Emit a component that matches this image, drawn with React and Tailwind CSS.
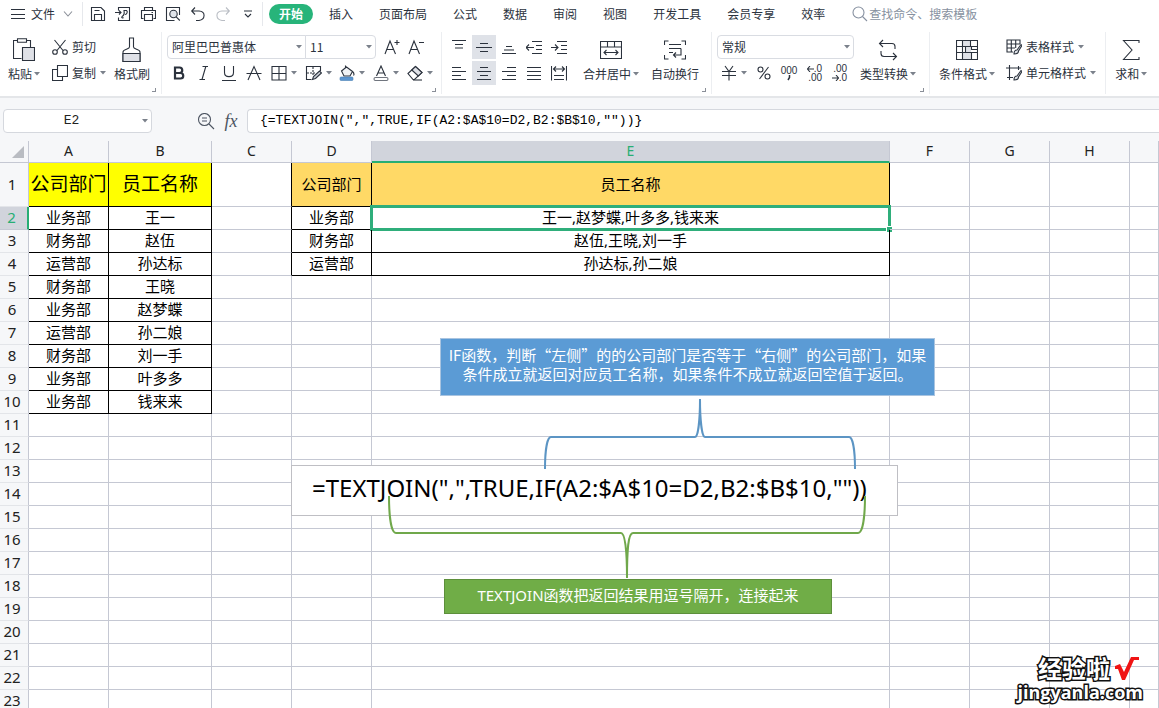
import { useState } from "react";

const UI_FONT = "font-['Noto_Sans_CJK_SC','Open_Sans',sans-serif]";
const SHEET_FONT = "font-['Noto_Sans','Noto_Sans_CJK_SC',sans-serif]";

const TABS = ["插入", "页面布局", "公式", "数据", "审阅", "视图", "开发工具", "会员专享", "效率"];

const COLUMNS = [
  { name: "A", width: "w-20" },
  { name: "B", width: "w-[103px]" },
  { name: "C", width: "w-20" },
  { name: "D", width: "w-20" },
  { name: "E", width: "w-[518px]" },
  { name: "F", width: "w-20" },
  { name: "G", width: "w-20" },
  { name: "H", width: "w-20" },
  { name: "", width: "" },
];

const STAFF = [
  ["公司部门", "员工名称"],
  ["业务部", "王一"],
  ["财务部", "赵伍"],
  ["运营部", "孙达标"],
  ["财务部", "王晓"],
  ["业务部", "赵梦蝶"],
  ["运营部", "孙二娘"],
  ["财务部", "刘一手"],
  ["业务部", "叶多多"],
  ["业务部", "钱来来"],
];

const RESULT = [
  ["公司部门", "员工名称"],
  ["业务部", "王一,赵梦蝶,叶多多,钱来来"],
  ["财务部", "赵伍,王晓,刘一手"],
  ["运营部", "孙达标,孙二娘"],
];

const ROWS = Array.from({ length: 23 }, (_, i) => i);

function cellText(row, col) {
  if (col < 2) return STAFF[row]?.[col];
  if (col === 3 || col === 4) return RESULT[row]?.[col - 3];
  return undefined;
}

function cellClass(row, col) {
  const inStaff = row < STAFF.length && col < 2;
  const inResult = row < RESULT.length && (col === 3 || col === 4);
  let cls = "relative whitespace-nowrap border-b border-r px-0 pb-0.5 pt-0 text-center text-black ";
  if (inStaff || inResult) cls += "border-black ";
  else if (col === 2 && row < RESULT.length) cls += "border-b-[#c5c8d3] border-r-black ";
  else cls += "border-[#c5c8d3] ";
  if (row === 0 && inStaff) cls += "bg-[#ffff00] text-[19px] ";
  else cls += "text-[15px] ";
  if (row === 0 && inResult) cls += "bg-[#ffd966] ";
  return cls;
}

function Svg({ w = 16, h = 16, children }) {
  return (
    <svg width={w} height={h} viewBox={`0 0 ${w} ${h}`} fill="none" stroke="currentColor" strokeWidth="1.1" className="shrink-0" aria-hidden="true">
      {children}
    </svg>
  );
}

function Caret() {
  return (
    <svg width="6" height="4" viewBox="0 0 6 4" className="shrink-0 fill-[#7b818b]" aria-hidden="true">
      <path d="M0 0h6L3 3.6z" />
    </svg>
  );
}

const icons = {
  menu: <Svg w={14}><path d="M0 3.5h14M0 8.5h14M0 12.5h14" /></Svg>,
  save: <Svg><path d="M1.5 14.5v-13h9.5l3.5 3.5v9.5zM4.5 14.5v-6h7v6M4.5 4.5h5" /></Svg>,
  pdf: <Svg><path d="M3.5 4.5v-3h11v13h-11v-3M0 6.5h6M4 4.5l2 2-2 2M8.5 11.5c-1.5 1-2.5 0-1-1.3 2-1.2 2-3 1.5-5.7h2.5c1.5 1 .5 4-1.500 4" /></Svg>,
  print: <Svg><path d="M4.500 4.500v-3h8v3M3.500 12.500h-2v-8h14v8h-2M4.500 8.500h8v6h-8zM11.500 6.500h1.500" /></Svg>,
  preview: <Svg><path d="M14.500 9V1.500h-13v13h8" /><circle cx="8.500" cy="8" r="3.700" fill="#dfe3e9" /><path d="M11.200 10.800l3.600 3.700" /></Svg>,
  undo: <Svg><path d="M5 1.500L1.700 5 5 8.500M2 5h7c7 .5 6.500 8.500 0 9.500H6" /></Svg>,
  redo: <Svg><path d="M11 1.500L14.300 5 11 8.500M14 5H7c-7 .5-6.500 8.500 0 9.500h3" /></Svg>,
  more: <Svg w={8} h={8}><path d="M0 1h8M1 4l3 3 3-3" /></Svg>,
  down: <Svg w={10} h={6}><path d="M1 .5l4 4.500 4-4.500" /></Svg>,
  search: <Svg><circle cx="6.500" cy="6.500" r="5.500" /><path d="M10.500 10.500l4.500 4.500" /></Svg>,
  paste: (
    <Svg w={22} h={24}>
      <path d="M8.500 20.500h-8v-18h4M13.500 2.500h4v7" />
      <path d="M4.500.8h9v3.400h-9z" />
      <path d="M9.500 9.500h12v13h-12z" fill="#dfe1e7" />
    </Svg>
  ),
  cut: <Svg><path d="M2.500 1l8.500 10.500M13.500 1L5 11.500" /><circle cx="3" cy="13" r="2.300" /><circle cx="13" cy="13" r="2.300" /></Svg>,
  copy: <Svg><path d="M5.500.5h10v11h-10zM5 4.500H.5v11h10v-4" /></Svg>,
  brush: (
    <Svg w={20} h={26}>
      <path d="M7.500 10V1h4v9c0 2.500 6.500 2 6.500 5v9.500H1V15c0-3 6.500-2.500 6.500-5z" />
      <path d="M1 16.500h17v8H1z" fill="#dfe1e7" />
    </Svg>
  ),
  grow: <Svg w={18}><path d="M2 15L7 2l5.500 13M4 10.500h6.500M11.500 3.500h5M14 1v5" /></Svg>,
  shrink: <Svg w={18}><path d="M2 15L7 2l5.500 13M4 10.500h6.500M12 3.500h5" /></Svg>,
  bold: <Svg w={14}><path d="M3 2.500h4.500a2.700 2.700 0 010 5.500H3zM3 8h5.500a2.700 2.700 0 010 5.500H3z" strokeWidth="2.200" /></Svg>,
  italic: <Svg w={12}><path d="M4.500 1.500H10M1.500 14.500H7M7.800 1.500L4 14.500" /></Svg>,
  underline: <Svg><path d="M3.500 1v6.500c0 5.500 9 5.500 9 0V1M1 15.500h14" /></Svg>,
  strike: <Svg><path d="M2 15L8 1.500 14 15M.5 8.500h15" /></Svg>,
  borders: <Svg><path d="M1 1.500h14v13.500H1zM8 1.500V15M1 8.500h14" /></Svg>,
  drawBorder: (
    <Svg w={17}>
      <path d="M15.500 6V1.500h-14v13h5" />
      <path d="M8 2v8M2 8h8" strokeDasharray="2 1" />
      <path d="M7.500 14.500l1-3 6-5.500 2 2-6 5.500z" fill="#c9ced6" />
    </Svg>
  ),
  fill: (
    <Svg>
      <path d="M6.500.5v3M2.500 6l5-4 6 4.500-2.500 4.500H5z" fill="#f1f3f6" />
      <path d="M13.500 6.500c1.500 1.500 1.800 3 1 4" />
      <rect x="1" y="12" width="13" height="3.500" rx="1" fill="#5b95d0" stroke="#4a7fb5" strokeWidth=".6" />
    </Svg>
  ),
  fontColor: <Svg><path d="M3.500 11L8 1l4.500 10M5 8h6" /><rect x="1" y="12.500" width="14" height="3" rx="1.500" stroke="#70757e" /></Svg>,
  eraser: <Svg><path d="M1 8.500L8.500 1.500l6.500 6-7.500 7H6z" /><path d="M4.800 5l6.500 6L15 7.500l-6.500-6z" fill="#dfe1e7" /><path d="M6 15h9" /></Svg>,
  top: <Svg><path d="M1 1.500h14M4 5.500h8M4 9h8" /></Svg>,
  middle: <Svg><path d="M4 4.500h8M0 8.500h16M4 12.500h8" /></Svg>,
  bottom: <Svg><path d="M5 7.500h6M3 11h10M1 14.500h14" /></Svg>,
  outdent: <Svg><path d="M6 2.500h10M10 6.500h6M10 10.500h6M6 14.500h10M0 8.500h8M3 5.500l-3 3 3 3" /></Svg>,
  indent: <Svg><path d="M6 2.500h10M10 6.500h6M10 10.500h6M6 14.500h10M0 8.500h7M4 5.500l3 3-3 3" /></Svg>,
  left: <Svg><path d="M1 2.500h9M1 6.500h14M1 10.500h9M1 14.500h14" /></Svg>,
  center: <Svg><path d="M4 2.500h8M1 6.500h14M4 10.500h8M1 14.500h14" /></Svg>,
  right: <Svg><path d="M6 2.500h9M1 6.500h14M6 10.500h9M1 14.500h14" /></Svg>,
  justify: <Svg><path d="M1 2.500h14M1 6.500h14M1 10.500h14M1 14.500h14" /></Svg>,
  distribute: <Svg><path d="M.5 1v14.500M15.500 1v14.500M2.500 4h11M5 1.500L2.500 4 5 6.500M11 1.500L13.500 4 11 6.500M3 10.500h10M3 14.500h10" /></Svg>,
  merge: <Svg w={22} h={20}><path d="M.5 1.500h21v17H.5zM.5 7h21M7.500 1.500V7M14.500 1.500V7M4 12.500h14M6.500 10L4 12.500 6.500 15M15.500 10l2.500 2.500-2.500 2.500" /></Svg>,
  wrap: <Svg w={22} h={20}><path d="M4.500 1H.5v4M17.500 1h4v4M4.500 19H.5v-4M17.500 19h4v-4M5 4.500h12M5 8.500h12M5 12.500h4M17 8.500v6.500H9M12 12.500L9.500 15l2.500 2.500" /></Svg>,
  yuan: <Svg><path d="M4 1l4 5.500L12 1M1 6.500h14M1 10.500h14M8 6.500V15.500" /></Svg>,
  percent: <Svg w={14}><circle cx="3.500" cy="4.500" r="2.500" /><circle cx="10.500" cy="11.500" r="2.500" /><path d="M11.500 2L2.500 14" /></Svg>,
  convert: <Svg w={20} h={22}><path d="M5 1L1.500 4.500 5 8M2 4.500h12c2 0 3 1 3 3V10M15 14l3.500 3.500L15 21M18 17.500H6c-2 0-3-1-3-3V12" /></Svg>,
  condition: (
    <Svg w={22} h={20}>
      <path d="M6 1h8v6H6zM9 7h6v6H9zM6 13h9v6H6z" fill="#dfe1e7" stroke="none" />
      <path d="M.5.500h21v19H.5zM.5 6.500h21M.5 12.500h21M6.500.5v19M14.500.5v6M9.500 6.500v6M15.500 12.500v7M15.500 6.500v3h6" />
    </Svg>
  ),
  tableStyle: (
    <Svg>
      <path d="M14 5V1H1v12h6M1 5h13M1 9h8M5.300 1v12M9.700 1v8" />
      <path d="M8 15c0-3 1-4 3-4l4-5.500 1 1-3.500 5.500c0 2-1.500 3-4.500 3z" fill="#e3e6eb" />
    </Svg>
  ),
  cellStyle: (
    <Svg>
      <path d="M3.500 0v15M0 3h15M12.500 1v4M1 12.500h6" />
      <path d="M8 15c0-3 1-4 3-4l4-5.500 1 1-3.500 5.500c0 2-1.500 3-4.500 3z" fill="#e3e6eb" />
    </Svg>
  ),
  sum: <Svg w={18} h={20}><path d="M17 3V.5H1.500L10 10l-8.500 9.500H17V17" /></Svg>,
  zoom: <Svg w={18} h={18}><circle cx="7.500" cy="7.500" r="6" /><path d="M12 12l5 5M5 6h5M5 9h5" /></Svg>,
};

function IconButton({ icon, label, active, menu, disabled }) {
  const size = menu ? "w-[34px] gap-1" : "w-6";
  return (
    <button type="button" aria-label={label} disabled={disabled} className={`flex h-6 shrink-0 items-center justify-center ${size} ${active ? "bg-[#dfe2e8]" : ""} ${disabled ? "text-[#b9bdc4]" : ""}`}>
      {icons[icon]}
      {menu && <Caret />}
    </button>
  );
}

function BigButton({ icon, label, menu }) {
  return (
    <button type="button" className="flex shrink-0 flex-col items-center whitespace-nowrap">
      <span className="flex h-[30px] items-center">{icons[icon]}</span>
      <span className="flex h-[18px] items-center gap-0.5">
        {label}
        {menu && <Caret />}
      </span>
    </button>
  );
}

function RowButton({ icon, label, menu }) {
  return (
    <button type="button" className="flex h-6 items-center gap-1 whitespace-nowrap">
      {icons[icon]}
      <span>{label}</span>
      {menu && <Caret />}
    </button>
  );
}

function Group({ children, launcher, className = "" }) {
  return (
    <div className={`relative flex h-[62px] shrink-0 border-r border-[#eceef1] pt-[3px] ${className}`}>
      {children}
      {launcher && <i className="absolute bottom-[2px] right-[5px] h-1 w-1 border-b border-r border-[#8a8f98]" />}
    </div>
  );
}

function Picker({ label, options, className }) {
  return (
    <label className={`relative flex h-6 items-center border border-[#d9dce2] bg-white ${className}`}>
      <select aria-label={label} className="w-full appearance-none bg-transparent pl-1 outline-none">
        {options.map((o) => (
          <option key={o}>{o}</option>
        ))}
      </select>
      <span className="pointer-events-none absolute right-[3px]"><Caret /></span>
    </label>
  );
}

function TopBar() {
  return (
    <div className="flex h-7 shrink-0 items-center whitespace-nowrap">
      <button type="button" className="flex h-6 items-center gap-1.5 pl-[11px] pr-[9px]">
        {icons.menu}
        <span>文件</span>
        <span className="ml-0.5 text-[#8a8f98]">{icons.down}</span>
      </button>
      <div className="flex h-6 items-center gap-px border-x border-[#e6e8ec] pl-[3px] pr-0.5">
        <IconButton icon="save" label="保存" />
        <IconButton icon="pdf" label="输出为PDF" />
        <IconButton icon="print" label="打印" />
        <IconButton icon="preview" label="打印预览" />
        <IconButton icon="undo" label="撤销" />
        <IconButton icon="redo" label="恢复" disabled />
        <IconButton icon="more" label="更多" />
      </div>
      <button type="button" className="ml-1.5 mr-4 h-5 rounded-full bg-[#27b47a] px-2.5 font-bold text-white">开始</button>
      <nav className="flex gap-[26px]">
        {TABS.map((t) => (
          <button key={t} type="button">{t}</button>
        ))}
      </nav>
      <label className="ml-[27px] flex items-center gap-px text-[#8791a0]">
        {icons.search}
        <input aria-label="搜索" placeholder="查找命令、搜索模板" className="w-32 bg-transparent outline-none placeholder:text-[#8791a0]" />
      </label>
    </div>
  );
}

function Ribbon() {
  return (
    <div className="flex h-[70px] shrink-0 items-start overflow-hidden border-b-2 border-[#e4e6e9] pt-1">
      <Group launcher className="gap-3 pl-2 pr-[11px]">
        <BigButton icon="paste" label="粘贴" menu />
        <div className="flex flex-col gap-0.5">
          <RowButton icon="cut" label="剪切" />
          <RowButton icon="copy" label="复制" menu />
        </div>
        <div className="-ml-1 flex">
          <BigButton icon="brush" label="格式刷" />
        </div>
      </Group>

      <Group launcher className="flex-col gap-0.5 pl-[5px] pr-1">
        <div className="flex">
          <Picker label="字体" options={["阿里巴巴普惠体"]} className="w-[139px] rounded-l" />
          <Picker label="字号" options={["11", "12", "14"]} className="-ml-px mr-1 w-[71px] rounded-r" />
          <IconButton icon="grow" label="增大字号" />
          <IconButton icon="shrink" label="减小字号" />
        </div>
        <div className="flex">
          <div className="flex gap-px pr-px">
            <IconButton icon="bold" label="加粗" />
            <IconButton icon="italic" label="倾斜" />
            <IconButton icon="underline" label="下划线" />
            <IconButton icon="strike" label="删除线" />
          </div>
          <IconButton icon="borders" label="边框" menu />
          <IconButton icon="drawBorder" label="绘制边框" menu />
          <IconButton icon="fill" label="填充颜色" menu />
          <IconButton icon="fontColor" label="字体颜色" menu />
          <IconButton icon="eraser" label="清除" menu />
        </div>
      </Group>

      <Group launcher className="gap-3 pl-[5px] pr-3">
        <div className="flex flex-col gap-0.5">
          <div className="flex gap-px">
            <IconButton icon="top" label="顶端对齐" />
            <IconButton icon="middle" label="垂直居中" active />
            <IconButton icon="bottom" label="底端对齐" />
            <IconButton icon="outdent" label="减少缩进" />
            <IconButton icon="indent" label="增加缩进" />
          </div>
          <div className="flex gap-px">
            <IconButton icon="left" label="左对齐" />
            <IconButton icon="center" label="水平居中" active />
            <IconButton icon="right" label="右对齐" />
            <IconButton icon="justify" label="两端对齐" />
            <IconButton icon="distribute" label="分散对齐" />
          </div>
        </div>
        <BigButton icon="merge" label="合并居中" menu />
        <BigButton icon="wrap" label="自动换行" />
      </Group>

      <Group launcher className="gap-1.5 pl-[5px] pr-[13px]">
        <div className="flex flex-col gap-0.5">
          <Picker label="数字格式" options={["常规", "数值", "货币"]} className="w-[137px] rounded" />
          <div className="flex gap-px">
            <IconButton icon="yuan" label="货币" menu />
            <IconButton icon="percent" label="百分比" />
            <button type="button" aria-label="千位分隔" className="flex h-6 w-6 flex-col items-center justify-center font-['Liberation_Sans',sans-serif] text-[10px] leading-[9px]">
              <span>000</span>
              <Svg w={4} h={6}><path d="M2.500 0v2.500L1 5" strokeWidth="1.500" /></Svg>
            </button>
            <button type="button" aria-label="增加小数位" className="flex h-6 w-6 flex-col items-end justify-center pr-1 font-['Liberation_Sans',sans-serif] text-[10px] leading-[9px]">
              <span className="flex items-center"><Svg w={7} h={6}><path d="M0 3h7M3 0L.5 3 3 6" /></Svg>.0</span>
              <span>.00</span>
            </button>
            <button type="button" aria-label="减少小数位" className="flex h-6 w-6 flex-col items-end justify-center pr-1 font-['Liberation_Sans',sans-serif] text-[10px] leading-[9px]">
              <span>.00</span>
              <span className="flex items-center"><Svg w={7} h={6}><path d="M0 3h7M4 0l2.500 3L4 6" /></Svg>.0</span>
            </button>
          </div>
        </div>
        <BigButton icon="convert" label="类型转换" menu />
      </Group>

      <Group className="gap-[11px] px-[9px]">
        <BigButton icon="condition" label="条件格式" menu />
        <div className="flex flex-col gap-0.5">
          <RowButton icon="tableStyle" label="表格样式" menu />
          <RowButton icon="cellStyle" label="单元格样式" menu />
        </div>
      </Group>

      <Group className="border-r-0 pl-[9px]">
        <BigButton icon="sum" label="求和" menu />
      </Group>
    </div>
  );
}

function FormulaBar({ formula, onChange }) {
  return (
    <div className="flex h-[43px] shrink-0 items-center bg-[#f6f7f9] pl-[3px] pt-0.5">
      <label className="relative flex h-6 w-[149px] items-center rounded-sm border border-[#d5d8de] bg-white">
        <input aria-label="名称框" defaultValue="E2" className="w-full bg-transparent pr-3 text-center font-['Liberation_Mono',monospace] text-[13px] text-[#222] outline-none" />
        <span className="pointer-events-none absolute right-[3px]"><Caret /></span>
      </label>
      <button type="button" aria-label="查找" className="ml-[45px] text-[#4d5562]">{icons.zoom}</button>
      <button type="button" aria-label="插入函数" className="ml-2 mr-2 w-4 font-['Liberation_Serif',serif] text-lg italic text-[#4d5562]">fx</button>
      <input
        aria-label="编辑栏"
        value={formula}
        onChange={(e) => onChange(e.target.value)}
        className="h-6 min-w-0 flex-1 rounded-l-sm border border-r-0 border-[#d5d8de] bg-white pl-3 font-['Liberation_Mono',monospace] text-[13px] text-black outline-none"
      />
    </div>
  );
}

function Sheet() {
  return (
    <table className={`w-full table-fixed border-separate border-spacing-0 ${SHEET_FONT}`}>
      <colgroup>
        <col className="w-[29px]" />
        {COLUMNS.map((c) => (
          <col key={c.name} className={c.width} />
        ))}
      </colgroup>
      <thead>
        <tr className="h-[22px] text-[14px] leading-[18px]">
          <th className="border-b border-r border-[#c5c8d3] bg-[#f6f7f9] p-0">
            <svg width="12" height="12" viewBox="0 0 12 12" className="ml-auto mr-1 fill-[#b9bcc2]" aria-hidden="true">
              <path d="M12 0v12H0z" />
            </svg>
          </th>
          {COLUMNS.map((c) => (
            <th key={c.name} className={c.name === "E" ? "border-b-2 border-r border-b-[#27ae74] border-r-[#c5c8d3] bg-[#d1d4dc] p-0 font-normal text-[#27ae74]" : "border-b border-r border-[#c5c8d3] bg-[#f6f7f9] p-0 pb-px font-normal text-[#222]"}>
              {c.name}
            </th>
          ))}
        </tr>
      </thead>
      <tbody>
        {ROWS.map((r) => (
          <tr key={r} className={r === 0 ? "h-11 leading-5" : "h-[23px] leading-5"}>
            <th className={r === 1 ? "border-b border-r-2 border-b-[#c5c8d3] border-r-[#27ae74] bg-[#d1d4dc] p-0 pb-0.5 pr-1 text-[15px] font-normal text-[#27ae74]" : "border-b border-r border-b-[#e3e5e9] border-r-[#c5c8d3] bg-[#f6f7f9] p-0 pb-0.5 pr-1 text-[15px] font-normal text-[#222]"}>
              {r + 1}
            </th>
            {COLUMNS.map((c, i) => (
              <td key={c.name} className={cellClass(r, i)}>
                {cellText(r, i)}
                {r === 1 && c.name === "E" && (
                  <span className="pointer-events-none absolute -bottom-0.5 -left-0.5 -right-0.5 -top-0.5 border-3 border-[#2fae7b]">
                    <i className="absolute -bottom-1 -right-1 h-1.5 w-1.5 border-l border-t border-white bg-[#2fae7b]" />
                  </span>
                )}
              </td>
            ))}
          </tr>
        ))}
      </tbody>
    </table>
  );
}

// floating shapes placed on the sheet
function Drawings() {
  return (
    <div className={`pointer-events-none absolute inset-0 ${SHEET_FONT}`}>
      <div className="absolute left-[440px] top-[197px] h-[58px] w-[495px] whitespace-nowrap border border-[#a9c4e0] bg-[#5b9bd5] pt-1.5 text-center font-['Noto_Sans_CJK_SC',sans-serif] text-[15px] leading-[19px] text-white">
        <p>IF函数，判断“左侧”的的公司部门是否等于“右侧”的公司部门，如果</p>
        <p>条件成立就返回对应员工名称，如果条件不成立就返回空值于返回。</p>
      </div>
      <div className="absolute left-[291px] top-[324px] h-[51px] w-[607px] whitespace-nowrap border border-[#bfbfc4] bg-white pl-5 text-2xl leading-[43px] text-black">
        =TEXTJOIN(",",TRUE,IF(A2:$A$10=D2,B2:$B$10,""))
      </div>
      <div className="absolute left-[444px] top-[438px] h-[35px] w-[388px] whitespace-nowrap border border-[#5d8f3b] bg-[#70ad47] text-center text-[15px] leading-[30px] text-white">
        TEXTJOIN函数把返回结果用逗号隔开，连接起来
      </div>
      <svg width="320" height="72" viewBox="540 398 320 72" className="absolute left-[540px] top-[257px] fill-none stroke-[#5c95c4] stroke-2" aria-hidden="true">
        <path d="M545 469C545 452 547 437 551 437H695C698 437 700 420 700 399C700 420 702 437 705 437H849C853 437 855 452 855 469" />
      </svg>
      <svg width="490" height="84" viewBox="380 495 490 84" className="absolute left-[380px] top-[354px] fill-none stroke-[#70a84b] stroke-2" aria-hidden="true">
        <path d="M389 496C389 515 391 533 396 533H621C625 533 627 550 627 578C627 550 628 533 633 533H858C863 533 865 515 865 496" />
      </svg>
    </div>
  );
}

function Watermark() {
  return (
    <div className="pointer-events-none absolute bottom-1.5 right-4 flex flex-col items-end font-['Open_Sans','Noto_Sans_CJK_SC',sans-serif] font-bold text-white [-webkit-text-stroke:3px_#111] [paint-order:stroke_fill]">
      <div className="flex items-center gap-1 pr-1 text-2xl leading-6">
        经验啦
        <svg width="25" height="26" viewBox="0 0 25 26" className="fill-[#f01414]" aria-hidden="true">
          <path d="M1 10l5-2 4 8 7-15h8v3h-5L11 24H8L4 13H1z" />
        </svg>
      </div>
      <div className="text-lg leading-5">jingyanla.com</div>
    </div>
  );
}

export default function App() {
  const [formula, setFormula] = useState('{=TEXTJOIN(",",TRUE,IF(A2:$A$10=D2,B2:$B$10,""))}');

  return (
    <div className={`flex h-screen flex-col overflow-hidden bg-white text-xs text-[#2b323d] ${UI_FONT}`}>
      <TopBar />
      <Ribbon />
      <FormulaBar formula={formula} onChange={setFormula} />
      <main className="relative min-h-0 flex-1 overflow-hidden">
        <Sheet />
        <Drawings />
        <Watermark />
      </main>
    </div>
  );
}
